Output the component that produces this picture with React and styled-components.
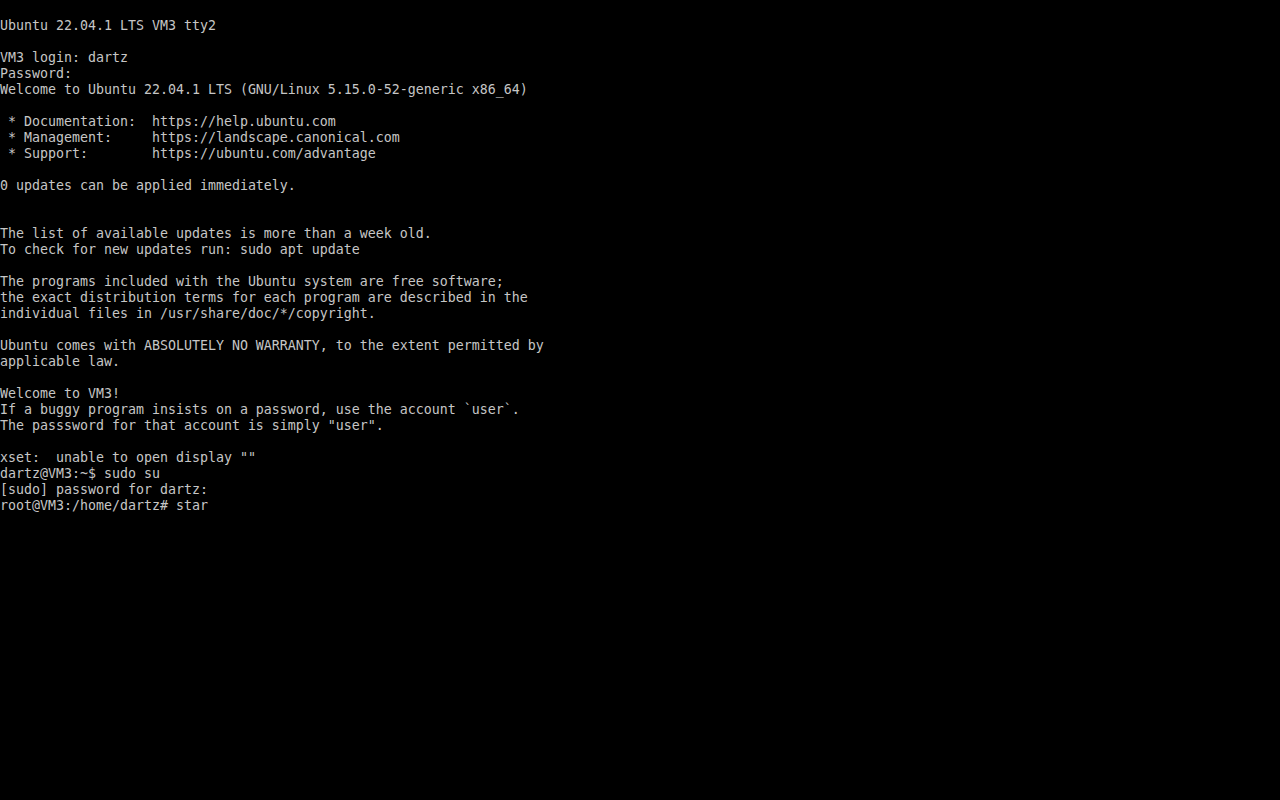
import React from 'react';
import styled, { createGlobalStyle } from 'styled-components';

const GlobalStyle = createGlobalStyle`
  html, body {
    margin: 0;
    padding: 0;
    background: #000;
  }
`;

const StyledConsole = styled.div`
  box-sizing: border-box;
  width: 1280px;
  height: 800px;
  overflow: hidden;
  background-color: #000;
  color: #c6c6c6;
  font-family: 'DejaVu Sans Mono', 'Liberation Mono', monospace;
  font-size: 13.29px;
  line-height: 16px;
  padding-top: 18px;
`;

const StyledConsoleLine = styled.div`
  height: 16px;
  white-space: pre;
`;

const lines = [
  'Ubuntu 22.04.1 LTS VM3 tty2',
  '',
  'VM3 login: dartz',
  'Password:',
  'Welcome to Ubuntu 22.04.1 LTS (GNU/Linux 5.15.0-52-generic x86_64)',
  '',
  ' * Documentation:  https://help.ubuntu.com',
  ' * Management:     https://landscape.canonical.com',
  ' * Support:        https://ubuntu.com/advantage',
  '',
  '0 updates can be applied immediately.',
  '',
  '',
  'The list of available updates is more than a week old.',
  'To check for new updates run: sudo apt update',
  '',
  'The programs included with the Ubuntu system are free software;',
  'the exact distribution terms for each program are described in the',
  'individual files in /usr/share/doc/*/copyright.',
  '',
  'Ubuntu comes with ABSOLUTELY NO WARRANTY, to the extent permitted by',
  'applicable law.',
  '',
  'Welcome to VM3!',
  'If a buggy program insists on a password, use the account `user`.',
  'The passsword for that account is simply "user".',
  '',
  'xset:  unable to open display ""',
  'dartz@VM3:~$ sudo su',
  '[sudo] password for dartz:',
  'root@VM3:/home/dartz# star',
];

export default function App() {
  return (
    <>
      <GlobalStyle />
      <StyledConsole>
        {lines.map((line, i) => (
          <StyledConsoleLine key={i}>{line}</StyledConsoleLine>
        ))}
      </StyledConsole>
    </>
  );
}
